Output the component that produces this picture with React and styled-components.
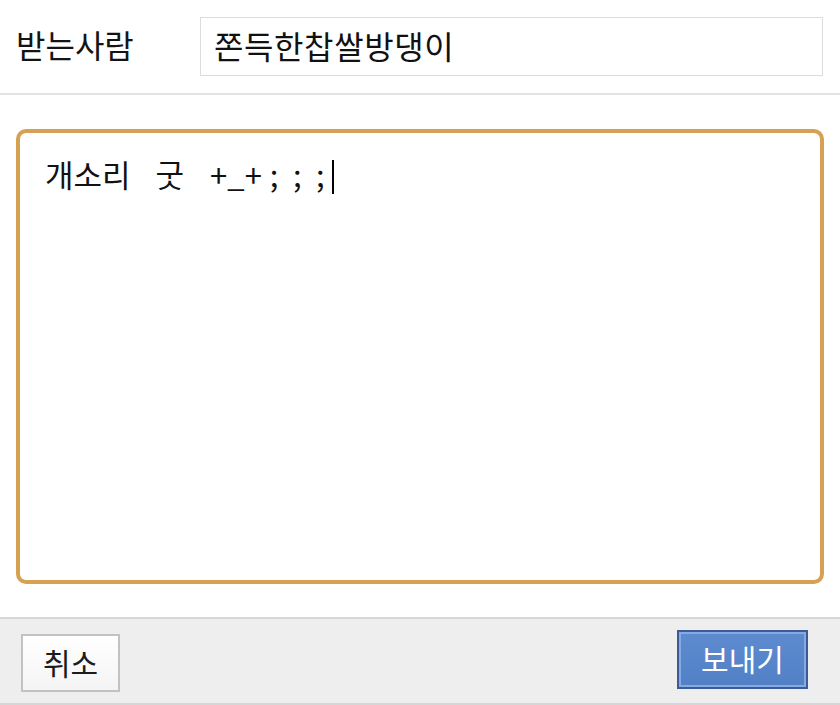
import React from "react";
import styled, { createGlobalStyle } from "styled-components";

const Global = createGlobalStyle`
  html, body { margin: 0; padding: 0; background: #ffffff; }
  body { font-family: "Noto Sans CJK KR", "Noto Sans", sans-serif; color: #111; }
  * { box-sizing: border-box; }
`;

const Page = styled.div`
  width: 840px;
  height: 705px;
  display: flex;
  flex-direction: column;
  background: #fff;
`;

const Header = styled.div`
  height: 95px;
  display: flex;
  align-items: flex-start;
  padding: 17px 17px 0 16px;
  border-bottom: 2px solid #e2e2e2;
`;

const Label = styled.div`
  width: 184px;
  height: 59px;
  display: flex;
  align-items: center;
  font-size: 32px;
  letter-spacing: 0;
  color: #141414;
  padding-bottom: 5px;
`;

const RecipientField = styled.div`
  flex: 1;
  height: 59px;
  border: 1px solid #dcdcdc;
  display: flex;
  align-items: center;
  padding: 0 0 3px 13px;
  font-size: 32px;
  letter-spacing: 0.6px;
  color: #111;
`;

const Body = styled.div`
  flex: 1;
  display: flex;
  padding: 34px 16px 33px 16px;
`;

const MessageBox = styled.div`
  flex: 1;
  border: 4px solid #d6a153;
  border-radius: 10px;
  padding: 19px 0 0 25px;
  font-size: 31px;
  color: #111;
  line-height: 44px;
  white-space: pre;
`;

const Word = styled.span`
  margin-left: ${(p) => p.$ml || 0}px;
  letter-spacing: ${(p) => p.$ls || 0}px;
`;

const Caret = styled.span`
  display: inline-block;
  width: 2px;
  height: 34px;
  background: #000;
  vertical-align: -7px;
  margin-left: ${(p) => p.$ml}px;
`;

const Footer = styled.div`
  height: 88px;
  background: #eeeeee;
  border-top: 2px solid #d6d6d6;
  border-bottom: 2px solid #d6d6d6;
  display: flex;
  align-items: center;
  justify-content: space-between;
  padding: 0 32px 0 21px;
`;

const Button = styled.button`
  font-family: "Noto Sans CJK KR", "Noto Sans", sans-serif;
  font-size: ${(p) => p.$fs}px;
  padding: 0 0 3px 0;
  cursor: pointer;
  display: flex;
  align-items: center;
  justify-content: center;
  width: ${(p) => p.$w}px;
  height: ${(p) => p.$h}px;
  margin-top: ${(p) => p.$mt || 0}px;
  ${(p) =>
    p.$primary
      ? `
    color: #ffffff;
    background: linear-gradient(#5e8bd0, #5180c6);
    border: 2px solid #3a5b98;
    box-shadow: inset 0 0 0 2px #86a9df;
  `
      : `
    color: #1c1c1c;
    background: linear-gradient(#ffffff, #f4f4f4);
    border: 2px solid #c2c2c2;
  `}
`;

export default function App() {
  return (
    <Page>
      <Global />
      <Header>
        <Label>받는사람</Label>
        <RecipientField>쫀득한찹쌀방댕이</RecipientField>
      </Header>
      <Body>
        <MessageBox>
          <Word>개소리</Word>
          <Word $ml={25}>굿</Word>
          <Word $ml={26}>+_+</Word>
          <Word $ml={8} $ls={14.5}>;;;</Word>
          <Caret $ml={-7} />
        </MessageBox>
      </Body>
      <Footer>
        <Button $fs={30} $w={99} $h={58} $mt={4}>취소</Button>
        <Button $primary $fs={30} $w={131} $h={59} $mt={-3}>보내기</Button>
      </Footer>
    </Page>
  );
}
